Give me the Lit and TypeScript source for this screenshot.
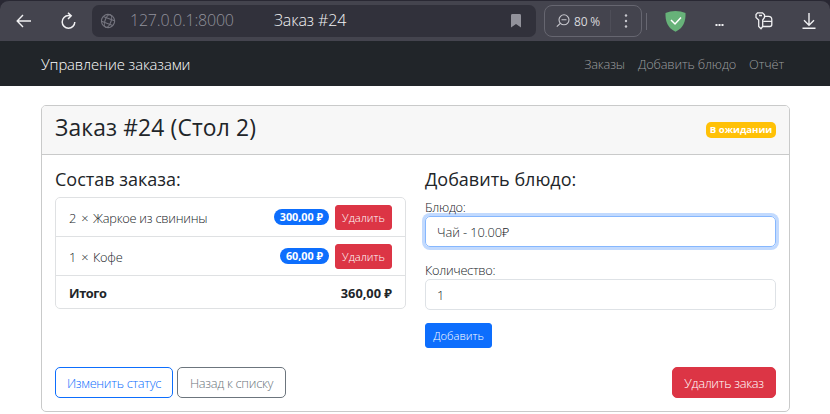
import { LitElement, html, css } from "lit";
import { customElement, state } from "lit/decorators.js";

interface OrderItem {
  qty: number;
  name: string;
  price: string;
}

@customElement("browser-bar")
export class BrowserBar extends LitElement {
  static styles = css`
    :host { display: block; height: 41px; background: #292833; font-family: "Open Sans", "Noto Sans", sans-serif; }
    .bar { box-sizing: border-box; height: 41px; border-top: 1px solid #292833; border-radius: 9px 9px 0 0; background: #44444e; display: flex; align-items: center; }
    svg { display: block; fill: none; stroke: #f0f0f2; flex: none; }
    .back { margin-left: 16px; }
    .reload { margin-left: 29px; }
    .address { margin-left: 16px; width: 444px; height: 32px; border-radius: 7px; background: #31313b; display: flex; align-items: center; flex: none; }
    .globe { margin-left: 8px; stroke: #75757f; }
    .host { margin-left: 14px; width: 144px; font-size: 16px; line-height: 30px; color: #92929b; letter-spacing: -0.2px; white-space: nowrap; }
    .title { font-size: 16px; line-height: 30px; color: #f2f2f4; white-space: nowrap; flex: 1; letter-spacing: -0.1px; }
    .host, .title { padding-bottom: 2px; font-weight: 350; }
    .bookmark { margin-right: 15px; fill: #92929b; stroke: none; }
    .zoom { box-sizing: border-box; margin-left: 8px; width: 98px; height: 32px; border: 1px solid #666670; border-radius: 8px; display: flex; align-items: center; flex: none; }
    .lens { margin-left: 11px; stroke: #c8c8ce; }
    .pct { margin-left: 4px; width: 36px; font-size: 12px; color: #d8d8dc; white-space: nowrap; letter-spacing: -0.2px; }
    .dots { margin-left: 10px; fill: #c8c8ce; stroke: none; }
    .split { width: 1px; height: 22px; background: #4e4e58; }
    .rule { width: 1px; height: 17px; background: #686872; margin-left: 4px; }
    .shield { margin-left: 18px; stroke: none; }
    .more { margin: 8px 0 0 29px; fill: #f0f0f2; stroke: none; }
    .keys { margin-left: 31px; }
    .down { margin-left: 28px; }
  `;
  render() {
    return html`
      <div class="bar">
        <svg class="back" width="16" height="14" viewBox="0 0 16 14" stroke-width="1.4"><path d="M15 7H1.500M7 1 1.200 7 7 13" /></svg>
        <svg class="reload" width="15" height="18" viewBox="0 0 15 18" stroke-width="1.5"><path d="M9.800 3.600H7.400A6.300 6.300 0 1 0 13.800 10M7 .7 10.200 3.700 7 7" /></svg>
        <div class="address">
          <svg class="globe" width="16" height="16" viewBox="0 0 16 16" stroke-width="1.1"><g transform="rotate(20 8 8)"><circle cx="8" cy="8" r="6.600" /><ellipse cx="8" cy="8" rx="3" ry="6.600" /><path d="M2 5.500h12M2 10.500h12" /></g></svg>
          <span class="host">127.0.0.1:8000</span>
          <span class="title">Заказ #24</span>
          <svg class="bookmark" width="10" height="14" viewBox="0 0 10 14"><path d="M0 1.400Q0 0 1.400 0h7.200Q10 0 10 1.400V13.500L5 10 0 13.500Z" /></svg>
        </div>
        <div class="zoom">
          <svg class="lens" width="14" height="14" viewBox="0 0 14 14" stroke-width="1.1"><circle cx="8" cy="5.800" r="5" /><path d="M4.300 9.300.8 12.700M5.500 5.800h5" /></svg>
          <span class="pct">80 %</span>
          <span class="split"></span>
          <svg class="dots" width="10" height="16" viewBox="0 0 10 16"><circle cx="5" cy="2.500" r="1.200" /><circle cx="5" cy="8" r="1.200" /><circle cx="5" cy="13.500" r="1.200" /></svg>
        </div>
        <span class="rule"></span>
        <svg class="shield" width="21" height="21" viewBox="0 0 21 21"><path d="M10.500 0C14 .1 17.500.7 20.500 2c.2 8-1.500 14.500-10 18.800C2 16.500.3 10 .5 2 3.500.7 7 .1 10.500 0Z" fill="#67b279" /><path d="m6 9 4 4 6-6.500" fill="none" stroke="#fff" stroke-width="1.500" /></svg>
        <svg class="more" width="9" height="4" viewBox="0 0 9 4"><path d="M.5 1h2v2h-2zM3.500 1h2v2h-2zM6.500 1h2v2h-2z" /></svg>
        <svg class="keys" width="19" height="18" viewBox="0 0 19 18" stroke-width="1.300"><path d="M2.500 .8H7.500L9.500 2.800V5.500L7.700 8V14.500L6 16.700 3.700 14.500V8L1 5.500V2.500ZM4 3.500h3M9.500 4.300H13.500Q16.800 4.300 16.800 7.500V12.500Q16.800 14.500 14.800 14.500H7.700M8.500 9.300h8.300" /></svg>
        <svg class="down" width="14" height="16" viewBox="0 0 14 16" stroke-width="1.400"><path d="M7 0V12M2 7.300 7 12.200 12 7.300M.5 15.200h13" /></svg>
      </div>
    `;
  }
}

@customElement("nav-bar")
export class NavBar extends LitElement {
  static styles = css`
    :host { display: block; background: #212529; font-family: "Open Sans", "Noto Sans", sans-serif; font-weight: 350; }
    nav { height: 45px; padding: 0 46px 0 41px; display: flex; align-items: center; }
    .brand { font-size: 14.800px; color: #fff; flex: 1; line-height: 44px; letter-spacing: -0.1px; }
    .links { display: flex; gap: 13px; font-size: 12.800px; color: #9b9d9f; line-height: 44px; letter-spacing: -0.15px; }
    .links, .brand { white-space: nowrap; }
  `;
  render() {
    return html`<nav>
      <span class="brand">Управление заказами</span>
      <div class="links"><span>Заказы</span><span>Добавить блюдо</span><span>Отчёт</span></div>
    </nav>`;
  }
}

@customElement("order-card")
export class OrderCard extends LitElement {
  @state() private items: OrderItem[] = [
    { qty: 2, name: "Жаркое из свинины", price: "300,00 ₽" },
    { qty: 1, name: "Кофе", price: "60,00 ₽" },
  ];

  static styles = css`
    :host { display: block; font-family: "Open Sans", "Noto Sans", sans-serif; font-weight: 350; font-size: 12.800px; color: #212529; }
    * { box-sizing: border-box; }
    h1, h2 { margin: 0; font-weight: 500; white-space: nowrap; }
    .card { width: 749px; height: 307px; border: 1px solid #c9caca; border-radius: 5px; background: #fff; display: flex; flex-direction: column; overflow: hidden; }
    .head { height: 49px; background: #f7f7f7; border-bottom: 1px solid #c9caca; padding: 0 13px; display: flex; justify-content: space-between; align-items: center; }
    h1 { font-size: 22.800px; line-height: 30px; padding-bottom: 4px; letter-spacing: 0.15px; }
    .status { width: 70px; height: 16px; border-radius: 5px; background: #ffc107; color: #fff; font-weight: 700; font-size: 9.600px; line-height: 15px; text-align: center; white-space: nowrap; }
    .body { flex: 1; padding: 13px; display: flex; flex-direction: column; justify-content: space-between; }
    .cols { display: flex; gap: 19px; }
    .col { width: 351px; }
    h2 { font-size: 18px; line-height: 23px; height: 29px; }
    .list { border: 1px solid #dfe1e3; border-radius: 5px; height: 112px; }
    .row { height: 39px; padding: 0 13px; display: flex; align-items: center; border-bottom: 1px solid #dfe1e3; white-space: nowrap; }
    .row:last-child { height: 33px; border: 0; font-weight: 700; justify-content: space-between; }
    .count { width: 24px; padding-top: 2px; word-spacing: 1.500px; }
    .name { flex: 1; padding-top: 2px; letter-spacing: -0.25px; }
    .total { letter-spacing: -0.4px; }
    .pill { height: 16px; border-radius: 8px; background: #0d6efd; color: #fff; font-weight: 700; font-size: 10.800px; line-height: 16px; padding: 0 6px; margin-right: 6px; }
    .btn { height: 31px; border-radius: 5px; border: 1px solid; display: flex; align-items: center; justify-content: center; white-space: nowrap; font-size: 12.800px; letter-spacing: -0.3px; }
    .small { height: 25px; border-radius: 3px; font-size: 11.200px; letter-spacing: 0; }
    .danger { background: #dc3545; border-color: #dc3545; color: #fff; }
    .remove { width: 57px; }
    .primary { background: #0d6efd; border-color: #0d6efd; color: #fff; }
    .add { width: 67px; margin-top: 13px; }
    .label { height: 19px; line-height: 20px; letter-spacing: -0.3px; }
    .field { height: 31px; border: 1px solid #dee2e6; border-radius: 5px; padding: 2px 11px 0; line-height: 27px; letter-spacing: -0.1px; }
    .focus { border-color: #86b7fe; box-shadow: 0 0 0 3px #c2dafe; }
    .qty { margin-top: 13px; }
    .actions { display: flex; gap: 4px; }
    .outline { color: #0d6efd; width: 118px; }
    .muted { color: #6c757d; width: 109px; }
    .kill { width: 104px; margin-left: auto; }
  `;

  render() {
    return html`
      <section class="card">
        <header class="head"><h1>Заказ #24 (Стол 2)</h1><span class="status">В ожидании</span></header>
        <div class="body">
          <div class="cols">
            <div class="col">
              <h2>Состав заказа:</h2>
              <div class="list">
                ${this.items.map((i) => html`<div class="row">
                  <span class="count">${i.qty} ×</span>
                  <span class="name">${i.name}</span>
                  <span class="pill">${i.price}</span>
                  <span class="btn small danger remove">Удалить</span>
                </div>`)}
                <div class="row"><span class="total">Итого</span><span class="sum">360,00 ₽</span></div>
              </div>
            </div>
            <div class="col">
              <h2>Добавить блюдо:</h2>
              <div class="label">Блюдо:</div>
              <div class="field focus">Чай - 10.00₽</div>
              <div class="label qty">Количество:</div>
              <div class="field">1</div>
              <span class="btn small primary add">Добавить</span>
            </div>
          </div>
          <div class="actions">
            <span class="btn outline">Изменить статус</span>
            <span class="btn muted">Назад к списку</span>
            <span class="btn danger kill">Удалить заказ</span>
          </div>
        </div>
      </section>
    `;
  }
}

@customElement("app-root")
export class AppRoot extends LitElement {
  static styles = css`
    :host { display: block; width: 830px; height: 414px; background: #fff; overflow: hidden; }
    .page { padding: 19px 0 0 41px; }
  `;
  render() {
    return html`<browser-bar></browser-bar><nav-bar></nav-bar><main class="page"><order-card></order-card></main>`;
  }
}
